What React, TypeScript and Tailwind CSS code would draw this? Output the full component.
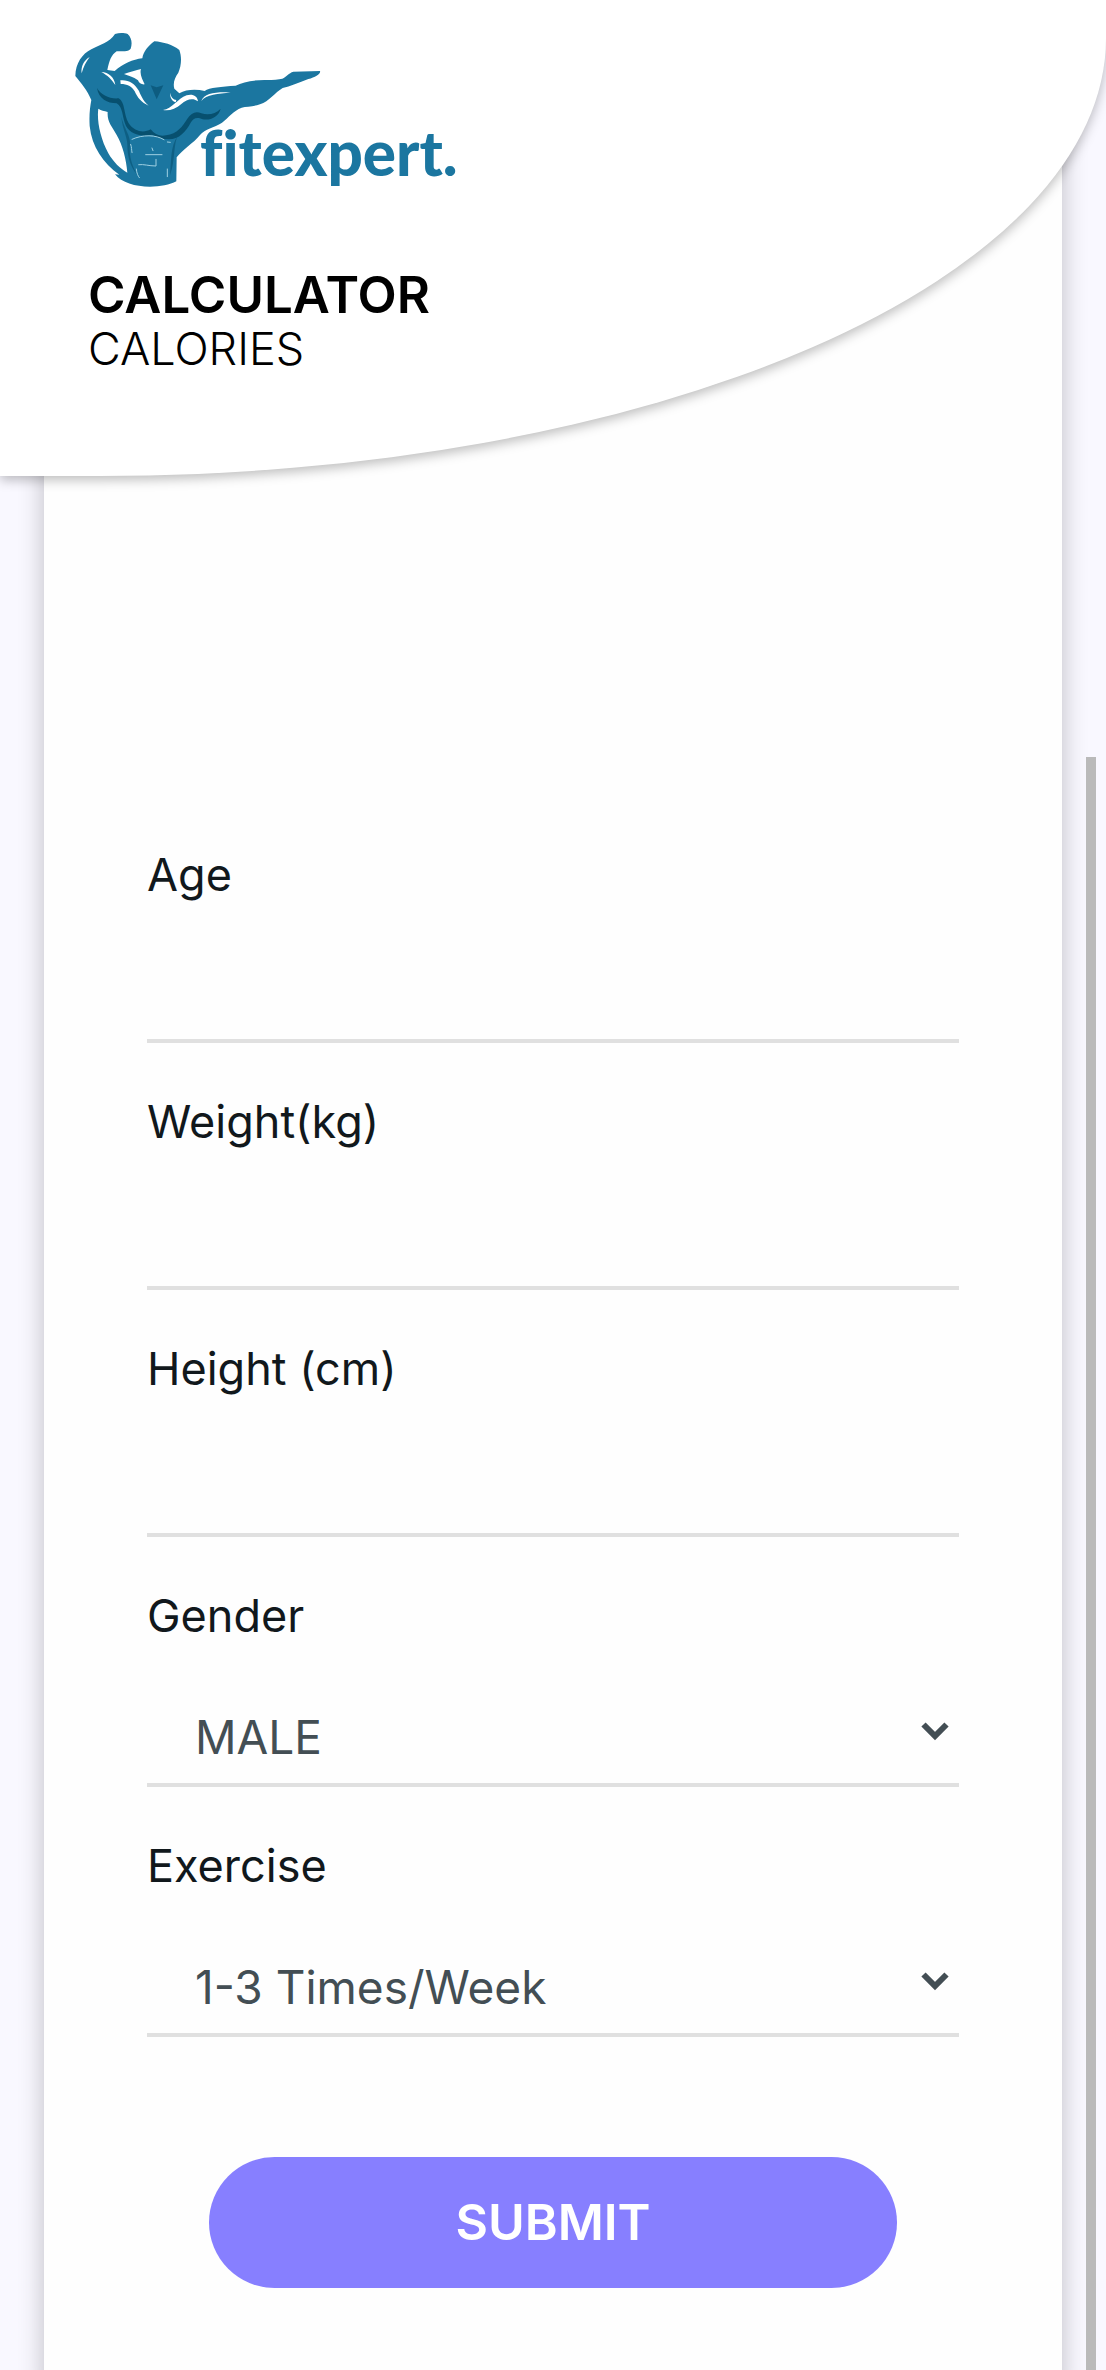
import React from "react";

function Logo() {
  return (
    <svg viewBox="0 0 1260 540" className="ml-[60px] h-[180px] w-[420px]" role="img" aria-label="fitexpert.">
      <g fill="#1b76a0">
        <path
          fillRule="evenodd"
          d="M165 42C178 38 194 39 203 42C216 54 217 72 212 86C206 95 188 94 170 94C154 104 148 122 142 150L164 153C190 130 218 119 247 115C250 95 264 78 283 64C310 66 338 74 358 90C366 112 364 138 355 158C345 172 338 188 343 206L358 220C378 208 408 207 434 213C448 202 485 200 527 197C548 187 580 179 620 180C640 180 656 178 667 176C680 170 686 159 700 155L780 153C783 161 766 171 745 177C716 189 690 199 668 204C644 218 628 244 600 253C580 260 560 259 545 263C520 272 506 293 486 308C462 324 435 326 420 345C400 370 368 388 350 412L349 484C330 494 300 500 270 500C225 500 185 488 165 463L178 464C130 430 95 380 89 318C87 286 90 260 94 240C83 213 62 187 46 168C47 130 66 102 94 88C118 74 148 68 165 42ZM115 266C110 300 120 354 145 400C160 426 180 446 202 458C199 420 188 375 170 345C155 318 141 306 143 276C132 272 124 272 115 266ZM192 162C210 156 228 150 243 147C238 163 248 180 254 193C244 194 237 189 234 181C220 170 205 168 192 162Z"
        />
      </g>
      <g fill="#07506f">
        <path d="M111 204C122 224 150 238 176 235C196 246 190 282 206 310C224 336 252 340 272 328C284 344 300 350 318 346C352 342 368 318 382 296C394 278 408 272 424 280C446 286 466 282 482 266C476 290 452 302 428 298C408 290 400 296 392 308C378 334 358 358 326 358C306 358 290 352 276 344C248 352 212 344 198 318C186 292 190 262 170 250C142 250 116 236 111 204Z" />
        <path d="M184 290C192 326 212 345 210 374C206 410 218 440 232 464C210 440 202 408 202 374C202 350 188 330 184 290ZM352 350C340 376 346 420 330 466C334 420 332 376 352 350Z" opacity=".6" />
      </g>
      <path d="M272 196L290 202L310 196L290 238Z" fill="#0d5c80" />
      <g fill="#fff">
        <path d="M89 111C72 120 62 140 65 160C70 140 78 126 89 111Z" />
        <path d="M124 156C146 157 163 172 166 195C154 178 143 166 124 156Z" />
        <path d="M181 181C203 178 225 190 237 213C245 233 253 246 266 257C244 248 232 232 224 214C215 199 202 192 182 192Z" />
        <path d="M309 270C336 268 352 236 380 226C398 221 412 228 414 244C397 232 380 239 364 252C347 267 326 274 309 270Z" />
        <path d="M330 218C333 231 340 239 349 240L347 247C335 243 330 232 330 218Z" />
        <path d="M424 243C432 218 470 215 512 217C475 223 439 223 424 243Z" />
      </g>
      <g fill="none" stroke="#9fd0e2" strokeWidth="3" strokeLinecap="round">
        <path d="M216 358C248 343 288 344 312 359M322 366L331 367M212 373C216 382 214 390 216 398" />
        <path d="M276 384L279 392M257 404H306M236 434C252 432 266 438 288 438V418M229 447C230 460 234 468 238 473M322 447V470" />
      </g>
      <text x="420" y="468" fill="#1b76a0" className="font-['Lato'] text-[186px] font-black [font-variant-ligatures:none]">
        fitexpert.
      </text>
    </svg>
  );
}

const labelClass = "block text-[45px] leading-[64px] text-[#11181c]";

function NumberField({ id, label }: { id: string; label: string }) {
  return (
    <div>
      <label htmlFor={id} className={labelClass}>
        {label}
      </label>
      <input
        id={id}
        type="text"
        inputMode="numeric"
        className="block h-[136px] w-full border-b-4 border-[#e0e0e0] bg-transparent px-12 pt-11 text-[46px] text-[#434e54] outline-none"
      />
    </div>
  );
}

function SelectField({ id, label, options }: { id: string; label: string; options: string[] }) {
  return (
    <div>
      <label htmlFor={id} className={labelClass}>
        {label}
      </label>
      <div className="relative">
        <select
          id={id}
          className="block h-[139px] w-full appearance-none border-b-4 border-[#e0e0e0] bg-transparent pt-11 pr-16 pl-12 text-[46px] text-[#434e54] outline-none"
        >
          {options.map((option) => (
            <option key={option}>{option}</option>
          ))}
        </select>
        <svg
          viewBox="0 0 28 20"
          className="pointer-events-none absolute right-2.5 bottom-[46px] h-5 w-7"
          fill="none"
          stroke="#434e54"
          strokeWidth="6"
          aria-hidden="true"
        >
          <path d="M2.500 3.500L14 15L25.500 3.500" />
        </svg>
      </div>
    </div>
  );
}

export default function App() {
  return (
    <div className="relative flex min-h-screen flex-col overflow-hidden bg-[#f9f8ff] font-['Inter',sans-serif]">
      <header className="relative z-10 h-[476px] bg-white pt-5 shadow-[0_4px_12px_rgba(0,0,0,0.26)] [border-bottom-right-radius:91%_92%]">
        <Logo />
        <div className="mt-[68px] ml-[88px] text-black">
          <h1 className="text-[51px] leading-[54px] font-semibold">CALCULATOR</h1>
          <p className="text-[45px] leading-[54px] font-light">CALORIES</p>
        </div>
      </header>
      <main className="-mt-[400px] flex grow flex-col px-11">
        <form
          className="flex grow flex-col gap-[47px] bg-[#fefefe] px-[103px] pt-[767px] pb-20 shadow-[0_24px_24px_rgba(0,0,0,0.24)]"
          onSubmit={(event) => event.preventDefault()}
        >
          <NumberField id="age" label="Age" />
          <NumberField id="weight" label="Weight(kg)" />
          <NumberField id="height" label="Height (cm)" />
          <SelectField id="gender" label="Gender" options={["MALE", "FEMALE"]} />
          <SelectField id="exercise" label="Exercise" options={["1-3 Times/Week", "4-5 Times/Week", "Daily"]} />
          <button
            type="submit"
            className="mx-[62px] mt-[73px] h-[131px] rounded-full bg-[#877fff] text-[50px] font-semibold text-white"
          >
            SUBMIT
          </button>
        </form>
      </main>
      <div className="absolute top-[757px] right-2.5 bottom-0 w-2.5 bg-[#bababa]" aria-hidden="true" />
    </div>
  );
}
